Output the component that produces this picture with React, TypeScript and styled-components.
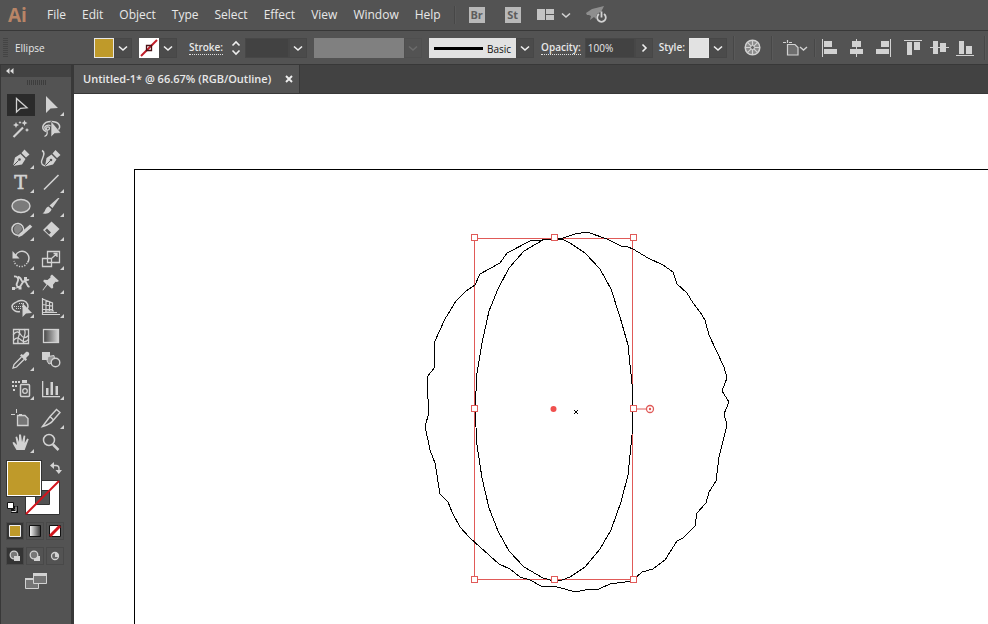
import React from "react";
import styled, { createGlobalStyle, css } from "styled-components";

const c = {
  panel: "#535353",
  dark: "#424242",
  line: "#383838",
  edge: "#474747",
  ink: "#d2d2d2",
  text: "#e8e8e8",
  gold: "#bf9a2a",
  select: "#e05a58",
};

const Global = createGlobalStyle`
  *, *::before, *::after { box-sizing: border-box; }
  body { margin: 0; background: ${c.panel}; font-family: "Open Sans", "Noto Sans", sans-serif; }
  button, input { font: inherit; color: inherit; border: 0; padding: 0; margin: 0; background: none; }
  svg { display: block; flex: none; }
`;

const Shell = styled.div`
  display: flex;
  flex-direction: column;
  height: 100vh;
  overflow: hidden;
  background: ${c.panel};
  color: ${c.text};
`;

const MenuBar = styled.header`
  display: flex;
  align-items: center;
  flex: none;
  height: 31px;
  padding-left: 8px;
  border-bottom: 1px solid ${c.line};
`;

const Logo = styled.span`
  width: 39px;
  font: 700 19px/28px "Open Sans", sans-serif;
  color: #b98567;
`;

const Menus = styled.nav`
  display: flex;
  gap: 16px;
`;

const MenuItem = styled.button`
  font-size: 12px;
  line-height: 20px;
`;

const Divider = styled.span<{ $tall?: boolean; $space: number }>`
  flex: none;
  width: 2px;
  height: ${(p) => (p.$tall ? 24 : 18)}px;
  margin: 0 ${(p) => p.$space}px;
  border-left: 1px solid ${c.edge};
  border-right: 1px solid #595959;
`;

const AppBadge = styled.button`
  width: 16px;
  height: 16px;
  margin-right: 20px;
  && {
    background: #b9b9b9;
    color: #5d5d5d;
    font-size: 11px;
    font-weight: 700;
    line-height: 16px;
  }
`;

const IconButton = styled.button<{ $left?: number }>`
  display: flex;
  flex: none;
  align-items: center;
  justify-content: center;
  && {
    margin-left: ${(p) => p.$left ?? 0}px;
    color: ${c.ink};
  }
`;

const OptionsBar = styled.section`
  display: flex;
  align-items: center;
  flex: none;
  height: 34px;
  padding-left: 3px;
  border-bottom: 1px solid ${c.line};
  font-size: 10px;
  white-space: nowrap;
`;

const Grip = styled.span<{ $wide?: boolean }>`
  ${(p) =>
    p.$wide
      ? css`
          width: 19px;
          height: 5px;
          background: repeating-linear-gradient(90deg, #3d3d3d 0 1px, transparent 1px 2px);
        `
      : css`
          width: 5px;
          height: 20px;
          background: repeating-linear-gradient(#444 0 1px, transparent 1px 2px);
        `}
`;

const ObjectKind = styled.span`
  flex: none;
  width: 79px;
  margin-left: 7px;
  line-height: 20px;
`;

const Group = styled.div<{ $after: number }>`
  display: flex;
  align-items: center;
  flex: none;
  height: 20px;
  margin-right: ${(p) => p.$after}px;
`;

const Swatch = styled.button<{ $fill: string }>`
  width: 20px;
  height: 20px;
  && {
    background: ${(p) => p.$fill};
    border: 1px solid #e6e6e6;
  }
`;

const Drop = styled.button<{ $dim?: boolean }>`
  display: flex;
  align-items: center;
  justify-content: center;
  width: 18px;
  height: 20px;
  && {
    border: 1px solid ${c.edge};
    border-color: ${(p) => (p.$dim ? "#4f4f4f" : c.edge)};
    color: ${(p) => (p.$dim ? "#6b6b6b" : "#f0f0f0")};
    background: ${(p) => (p.$dim ? "none" : "#4b4b4b")};
  }
`;

const FieldLabel = styled.label<{ $plain?: boolean }>`
  font-weight: 600;
  line-height: 13px;
  margin-right: 4px;
  border-bottom: 1px dotted ${(p) => (p.$plain ? "transparent" : "#e0e0e0")};
`;

const Field = styled.input<{ $w: number }>`
  width: ${(p) => p.$w}px;
  height: 20px;
  && {
    background: ${c.dark};
    border: 1px solid ${c.edge};
    padding-left: 2px;
  }
`;

const Steps = styled.span`
  display: flex;
  flex-direction: column;
  gap: 2px;
  margin: 0 4px;
`;

const Profile = styled.button`
  width: 90px;
  height: 20px;
  && {
    background: #808080;
  }
`;

const Brush = styled.button`
  display: flex;
  align-items: center;
  justify-content: space-between;
  width: 87px;
  height: 20px;
  && {
    background: #e2e2e2;
    color: #111;
    padding: 2px 5px 0;
  }
`;

const AlignTools = styled.div<{ $after: number }>`
  display: flex;
  flex: none;
  gap: 7px;
  margin-right: ${(p) => p.$after}px;
`;

const Body = styled.div`
  display: flex;
  flex: 1;
  min-height: 0;
`;

const ToolPanel = styled.aside`
  display: flex;
  flex-direction: column;
  flex: none;
  width: 74px;
  border-left: 1px solid ${c.line};
  border-right: 3px solid ${c.line};
`;

const PanelHead = styled.button`
  display: flex;
  align-items: center;
  height: 12px;
  width: 100%;
  && {
    background: ${c.dark};
    padding-left: 5px;
    color: #dcdcdc;
  }
`;

const GripRow = styled.div`
  display: flex;
  justify-content: center;
  height: 16px;
  padding-top: 3px;
`;

const ToolGroups = styled.div`
  display: flex;
  flex-direction: column;
  gap: 5px;
  padding-left: 5px;
`;

const ToolGroup = styled.div`
  display: grid;
  grid-template-columns: 30px 30px;
  grid-auto-rows: 24px;
`;

const ToolButton = styled.button<{ $on?: boolean }>`
  display: block;
  && {
    border-radius: 2px;
    background: ${(p) =>
      p.$on ? "linear-gradient(#2b2b2b, #2b2b2b) center / 28px 22px no-repeat" : "none"};
  }
`;

const ColorArea = styled.div`
  position: relative;
  height: 55px;
  margin: 7px 6px 6px;
`;

const StrokeBox = styled.button`
  position: absolute;
  right: 5px;
  bottom: 1px;
`;

const FillBox = styled.button`
  position: absolute;
  left: 0;
  top: 0;
  width: 34px;
  height: 35px;
  && {
    background: ${c.gold};
    border: 1px solid #fff;
    outline: 1px solid #333;
  }
`;

const Corner = styled.button<{ $swap?: boolean }>`
  position: absolute;
  ${(p) => (p.$swap ? "right: 3px; top: 1px;" : "left: 0; bottom: 3px;")}
`;

const ModeRow = styled.div`
  display: grid;
  grid-template-columns: repeat(3, 18px);
  gap: 2px;
  margin: 0 5px 7px;
`;

const Mode = styled.button<{ $on?: boolean }>`
  display: flex;
  align-items: center;
  justify-content: center;
  height: 18px;
  && {
    border: 1px solid #494949;
    background: ${(p) => (p.$on ? "#343434" : "none")};
  }
`;

const ScreenMode = styled.button`
  align-self: flex-start;
  && {
    margin: 1px 0 0 24px;
  }
`;

const Document = styled.main`
  display: flex;
  flex-direction: column;
  flex: 1;
  min-width: 0;
`;

const TabBar = styled.div`
  display: flex;
  height: 29px;
  flex: none;
  background: ${c.dark};
  border-bottom: 1px solid ${c.line};
`;

const Tab = styled.div`
  display: flex;
  align-items: center;
  gap: 14px;
  padding: 0 6px 0 9px;
  background: ${c.panel};
  border-right: 1px solid ${c.line};
`;

const TabTitle = styled.button`
  white-space: nowrap;
  && {
    font-size: 11px;
    font-weight: 600;
    line-height: 20px;
  }
`;

const Canvas = styled.div`
  flex: 1;
  min-height: 0;
  overflow: hidden;
  background: #fff;
`;

const Chevron = ({ right = false }: { right?: boolean }) => (
  <svg width="10" height="10" viewBox="0 0 10 10" fill="none" stroke="currentColor" strokeWidth="1.6">
    <path d={right ? "M3.5 1.5 7 5 3.5 8.5" : "M1 3.5 5 7 9 3.5"} />
  </svg>
);

const Step = ({ up = false }: { up?: boolean }) => (
  <svg width="10" height="7" viewBox="0 0 10 7" fill="none" stroke="#eee" strokeWidth="1.6">
    <path d={up ? "M1.500 5.500 5 2l3.500 3.500" : "M1.500 1.500 5 5l3.500-3.500"} />
  </svg>
);

const alignIcons: [string, React.ReactNode][] = [
  ["Align left", <><path d="M1.500 1v18" stroke={c.ink} /><path d="M3 3h8v6H3zM3 11h13v5H3z" /></>],
  ["Align horizontal center", <><path d="M9.500 1v18" stroke={c.ink} /><path d="M5 3h9v6H5zM3 11h13v5H3z" /></>],
  ["Align right", <><path d="M17.500 1v18" stroke={c.ink} /><path d="M8 3h8v6H8zM3 11h13v5H3z" /></>],
  ["Align top", <><path d="M0 2.500h18" stroke={c.ink} /><path d="M3 4h5v13H3zM10 4h6v8h-6z" /></>],
  ["Align vertical center", <><path d="M0 9.500h19" stroke={c.ink} /><path d="M3 3h5v13H3zM10 5h6v9h-6z" /></>],
  ["Align bottom", <><path d="M0 17.500h18" stroke={c.ink} /><path d="M3 3h5v13H3zM10 8h6v8h-6z" /></>],
];

const AlignIcon = ({ item }: { item: [string, React.ReactNode] }) => (
  <IconButton aria-label={item[0]}>
    <svg width="19" height="20" viewBox="0 0 19 20" fill={c.ink}>{item[1]}</svg>
  </IconButton>
);

const line = { fill: "none", stroke: c.ink } as const;

type Tool = { name: string; art: React.ReactNode; more?: boolean; on?: boolean };

const groups: Tool[][] = [
  [
    { name: "Selection", on: true, art: <path {...line} strokeWidth="1.3" d="M10.500 5.500v13.500l4-3.700 6.500-.5z" /> },
    { name: "Direct selection", more: true, art: <path d="M10 3v17l4.500-4.500 7.500-.5z" /> },
    {
      name: "Magic wand",
      art: (
        <>
          <path {...line} strokeWidth="2.2" d="M7.500 20 17 10.500" />
          <path d="m10 5 .9 2.100L13 8l-2.100.9L10 11l-.9-2.100L7 8l2.100-.9zM18.500 3l.9 2.100 2.100.9-2.100.9-.9 2.100-.9-2.100-2.100-.9 2.100-.9zM21 11l.7 1.300 1.300.7-1.300.7L21 15l-.7-1.300L19 13l1.300-.7zM14 4l.6 1 .9.500-.9.5-.6 1-.6-1-1-.5 1-.5z" />
        </>
      ),
    },
    {
      name: "Lasso",
      art: (
        <>
          <path {...line} strokeWidth="1.5" d="M10 14.500c-6-3-3-10 5-10 8 0 11 5 6.500 9" />
          <path {...line} strokeWidth="1.300" d="M15 9c-3-2-7 0-6 2.500s4.500 2 4.500-.2-3.500-1.800-3 .7c1 4 1.500 6-2 7.500" />
          <path stroke={c.panel} strokeWidth=".6" d="M15 4v16l3.500-3.500 6.500-.5z" />
        </>
      ),
    },
  ],
  [
    {
      name: "Pen", more: true,
      art: (
        <>
          <path d="M7 20 9 11.500l5.500-3.500 5 5-3.500 5.500zM15.500 7l3-3.500 5 5-3.500 3z" />
          <path stroke={c.panel} fill="none" d="m7 20 5.500-5.500" />
          <circle cx="13.500" cy="13.500" r="1.300" fill={c.panel} />
        </>
      ),
    },
    {
      name: "Curvature",
      art: (
        <>
          <path d="M9 20.500 10.500 12l5-3.500 5 5-3.500 5zM16.500 7.500l3-3.500 5 5-3.500 3z" />
          <path stroke={c.panel} fill="none" d="m9 20 5.500-5.500" />
          <circle cx="15" cy="14" r="1.300" fill={c.panel} />
          <path {...line} strokeWidth="1.400" d="M6 4.500C11 7 5 13 5.500 16.500S8 19 9 20" />
        </>
      ),
    },
    { name: "Type", more: true, art: <text x="14.500" y="19" textAnchor="middle" fontFamily="DejaVu Serif" fontSize="19" stroke={c.ink} strokeWidth=".6">T</text> },
    { name: "Line segment", more: true, art: <path {...line} strokeWidth="1.600" d="M8 19.500 22.500 5" /> },
    { name: "Ellipse", more: true, art: <ellipse cx="15" cy="12" rx="9" ry="6.500" fill="#7b7b7b" stroke={c.ink} strokeWidth="1.400" /> },
    {
      name: "Paintbrush", more: true,
      art: <path d="M23.500 4 16.500 14l-3-2.500L22 4zM12.500 12.500l3 2.700c-1 4-5 4.800-9 4.300 3-1.500 2.500-6 6-7z" />,
    },
    {
      name: "Shaper", more: true,
      art: (
        <>
          <path {...line} strokeWidth="1.500" d="M13 17a5.800 5.800 0 1 1 4.300-4" />
          <path fill="#858585" d="M8 11a4 4 0 1 1 7.500 1.500L12 16c-2.500 0-4-2.500-4-5z" />
          <path d="m12 19.500 1.500-4L24 6.500l2.300 2.300-10 8.700z" />
        </>
      ),
    },
    {
      name: "Eraser", more: true,
      art: (
        <>
          <path d="m15.500 3.500 8 7.500-8.500 8.500-8-7.500z" />
          <path fill={c.panel} d="m11 10.500 4 4-2 2-4-4z" />
        </>
      ),
    },
  ],
  [
    {
      name: "Rotate", more: true,
      art: (
        <>
          <path {...line} strokeWidth="1.500" d="M9.500 8.500a7 7 0 1 1 12 7" />
          <path {...line} strokeWidth="1.500" strokeDasharray="1.200 1.500" d="M21 16a7 7 0 0 1-13-2" />
          <path d="M6.500 4v7.500h7z" />
        </>
      ),
    },
    {
      name: "Scale", more: true,
      art: (
        <path {...line} strokeWidth="1.300" d="M11.500 4.500h12v11h-12zM6.500 11.500h9v8h-9zM16 11l4.500-4M17.500 6.500H21V10" />
      ),
    },
    {
      name: "Width", more: true,
      art: (
        <>
          <path {...line} strokeWidth="1.800" d="M8 5.500c4-.5 5 3 3.500 5.500s-1 5 1.500 5 3-6 5.500-6 1.500 5 5 6M12 6c4 0 3 6 5.500 5s3-3 5.500-2" />
          <path {...line} strokeWidth="1" d="M8 17.500l6-1.500" />
          <path d="M6 16h3v3H6zM18 6h3v3h-3zM12.500 15.500h3v3h-3z" />
        </>
      ),
    },
    {
      name: "Puppet warp", more: true,
      art: <path d="m16 3.500 7 6.500-2 1-1.500-.3-2.500 3 .2 3.300-1.700.5-4-3.700L7 19.500 6.500 19l4-5.500-3.300-3.200.8-1.500 3.500.2 3-2.500-.2-1.500z" />,
    },
    {
      name: "Shape builder", more: true,
      art: (
        <>
          <path {...line} strokeWidth="1.500" d="M14 16.500c-4 1-8-1.500-8-5C6 8.500 9 8 10.500 7s6.500-3 9.500 0 2 6 1 7" />
          <path {...line} strokeDasharray="1 1" d="M8 11.500h9M13 8.500h5M10 13.500h5" />
          <path d="M16.500 8v14l3.500-3.500 6-.5z" />
        </>
      ),
    },
    {
      name: "Perspective grid", more: true,
      art: <path {...line} strokeWidth="1.200" d="M6.500 3v17M6.500 4l10 4v8M6.500 9.500l10 1.500M6.500 14.500h10M10 5v12M13.500 7v9M6 19.500h18M7 17.500h14M9 16h9" />,
    },
  ],
  [
    {
      name: "Mesh",
      art: <path {...line} strokeWidth="1.300" d="M7.500 5.500h15v14h-15zM7 11c4-5 6-3 8 0s4 4 8 0M7 17c4-5 6-3 8-1s4 3 8-1M12.500 5c4 4-3 9 0 15M18 5c4 5-3 9 0 15" />,
    },
    { name: "Gradient", art: <rect x="7.500" y="5.500" width="15" height="13" fill="url(#toolGrad)" stroke={c.ink} strokeWidth="1.300" /> },
    {
      name: "Eyedropper", more: true,
      art: (
        <>
          <path {...line} strokeWidth="1.300" d="m15.500 9-7.500 7.500-1 3.500 3.500-1 7.500-7.500" />
          <path d="M14 7.500 15.500 6l1.500 1 3-3c2-1 4 1 3 3l-3 3 1 1.500-1.500 1.500z" />
        </>
      ),
    },
    {
      name: "Blend",
      art: (
        <>
          <path d="M6 4h8v8H6z" />
          <path fill="#949494" stroke={c.ink} d="M12 8.500l6-1 1 6-6 2.500-2-3z" />
          <circle cx="19.500" cy="14.500" r="4.300" fill={c.panel} stroke={c.ink} strokeWidth="1.400" />
        </>
      ),
    },
  ],
  [
    {
      name: "Symbol sprayer", more: true,
      art: (
        <>
          <path d="M6 4h2v2H6zM9 4h2v2H9zM12 4h2v2h-2zM6 8h2v2H6zM9 8h2v2H9zM7 12h2v2H7zM16 3h5v3h-5z" />
          <rect x="14.500" y="7.500" width="9" height="12" rx="1" {...line} strokeWidth="1.500" />
          <circle cx="19" cy="14" r="2.300" {...line} strokeWidth="1.300" />
        </>
      ),
    },
    { name: "Column graph", more: true, art: <path d="M6 4h1.300v15H24v1.300H6zM10 11h2.500v7H10zM14.500 5H17v13h-2.500zM19.500 9H22v9h-2.500z" /> },
  ],
  [
    {
      name: "Artboard",
      art: (
        <>
          <path fill="#767676" stroke={c.ink} strokeWidth="1.300" d="M11.500 9.500h7.500l3 3v7H11.500z" />
          <path {...line} d="M5 8.500h4M10.500 3v4M13 8.500h3" />
        </>
      ),
    },
    {
      name: "Slice", more: true,
      art: <path {...line} strokeWidth="1.400" d="M6.500 20.500 14 10.500l6.500-7 3.500 3-6.500 7.500c-2 3-6 5-11 6.500zM14 10.500l3.500 3.500" />,
    },
    {
      name: "Hand", more: true,
      art: <path d="M10.500 20C9 17 7 15 6.500 12.500l1.500-.5 3 3L9.500 7l1.500-.5L13 12l0-7.500h2L16 12l1.700-6.500 1.600.3L18.700 13l2.500-4.500 1.500.7-3 8-1 2.800z" />,
    },
    {
      name: "Zoom",
      art: (
        <>
          <circle cx="13" cy="10" r="5.500" {...line} strokeWidth="1.500" />
          <path {...line} strokeWidth="2.500" d="m17 14.500 5.500 5.500" />
        </>
      ),
    },
  ],
];

const ROUGH =
  "554,239 542,240 530,241 507,253 500,263 480,274 475,285 466,291 456,301 445,319 435,341 434,354 435,367 427,377 427,384 429,413 425,426 430,450 435,463 440,494 448,502 452,512 460,527 470,538 480,547 499,564 510,569 520,577 530,580 541,586 557,587 576,592 585,590 599,589 610,584 632,581 642,572 653,569 665,560 677,541 683,538 695,526 697,513 706,503 709,492 716,481 719,457 724,437 727,425 724,414 729,402 722,391 727,378 724,367 709,335 705,320 700,312 693,303 687,293 677,284 673,272 663,265 648,258 633,249 628,247 621,246 607,239 587,232 575,234 563,238";

const OVAL =
  "554,239 562,239 570,243 585,253 600,269 611,289 620,317 628,345 632,384 633,409 632,435 628,475 621,502 611,530 600,549 585,567 570,577 562,580 554,581 543,578 524,567 509,551 498,531 489,508 482,478 477,445 475,409 477,373 482,343 489,311 498,289 509,268 524,251 543,240";

const handles = [
  [474, 237], [554, 237], [633, 237], [474, 408], [633, 408], [474, 579], [554, 579], [633, 579],
];

const Artwork = () => (
  <svg width="100%" height="100%" role="img" aria-label="Ellipse artwork">
    <g transform="translate(-74 -94)" fill="none">
      <path d="M134.500 2000V169.500H4000" stroke="#000" shapeRendering="crispEdges" />
      <rect x="474.500" y="238.500" width="158" height="341" stroke={c.select} />
      <g stroke="#000" shapeRendering="crispEdges">
        <polygon points={ROUGH} />
        <polygon points={OVAL} />
      </g>
      <path d="M637 409h9" stroke={c.select} />
      <circle cx="650" cy="409" r="3.500" stroke={c.select} strokeWidth="1.300" />
      <circle cx="650" cy="409" r="1.200" fill={c.select} />
      {handles.map(([x, y]) => (
        <rect key={`${x}-${y}`} x={x - 2.5} y={y - 2.5} width="6" height="6" fill="#fff" stroke={c.select} />
      ))}
      <circle cx="553.500" cy="409" r="3" fill="#f0504e" />
      <path d="m574 410 4 4m0-4-4 4" stroke="#000" />
    </g>
  </svg>
);

const menus = ["File", "Edit", "Object", "Type", "Select", "Effect", "View", "Window", "Help"];

export default function App() {
  return (
    <Shell>
      <Global />
      <MenuBar>
        <Logo>Ai</Logo>
        <Menus>
          {menus.map((m) => (
            <MenuItem key={m}>{m}</MenuItem>
          ))}
        </Menus>
        <Divider $space={13} />
        <AppBadge>Br</AppBadge>
        <AppBadge>St</AppBadge>
        <IconButton $left={-4} aria-label="Arrange documents">
          <svg width="17" height="12" viewBox="0 0 17 12" fill="#c4c4c4">
            <path d="M0 0h8v11H0zM9 0h8v5H9zM9 6h8v5H9z" />
          </svg>
        </IconButton>
        <IconButton $left={7} aria-label="Arrange options">
          <Chevron />
        </IconButton>
        <IconButton $left={15} aria-label="GPU performance">
          <svg width="22" height="18" viewBox="0 0 22 18">
            <path fill="#8e8e8e" d="M0 7 6 3l12-3-3 6-5 7-2-2-4 3 1-4-2-1-2 0z" />
            <circle cx="15.500" cy="11.500" r="5.500" fill={c.panel} />
            <path {...line} strokeWidth="1.800" d="M13 8a4.300 4.300 0 1 0 5 0M15.500 5.500v6" />
          </svg>
        </IconButton>
      </MenuBar>

      <OptionsBar aria-label="Control panel">
        <Grip />
        <ObjectKind>Ellipse</ObjectKind>
        <Group $after={7}>
          <Swatch $fill={c.gold} aria-label="Fill color" />
          <Drop aria-label="Fill options"><Chevron /></Drop>
        </Group>
        <Group $after={12}>
          <IconButton aria-label="Stroke color">
            <svg width="20" height="20" viewBox="0 0 20 20">
              <path fill="#fff" d="M0 0h20v20H0z" />
              <path stroke="#c01c28" strokeWidth="2" d="M2 18 18 2" />
              <path fill="none" stroke="#4a1216" strokeWidth="1.300" d="M7.500 7.500h5v5h-5z" />
            </svg>
          </IconButton>
          <Drop aria-label="Stroke options"><Chevron /></Drop>
        </Group>
        <Group $after={7}>
          <FieldLabel htmlFor="weight">Stroke:</FieldLabel>
          <Steps>
            <IconButton aria-label="Increase stroke"><Step up /></IconButton>
            <IconButton aria-label="Decrease stroke"><Step /></IconButton>
          </Steps>
          <Field id="weight" $w={44} defaultValue="" />
          <Drop aria-label="Stroke weights"><Chevron /></Drop>
        </Group>
        <Group $after={7}>
          <Profile aria-label="Width profile" />
          <Drop $dim disabled aria-label="Width profiles"><Chevron /></Drop>
        </Group>
        <Group $after={7}>
          <Brush>
            <svg width="49" height="3" viewBox="0 0 49 3"><path d="M0 0h49v3H0z" /></svg>
            Basic
          </Brush>
          <Drop aria-label="Brushes"><Chevron /></Drop>
        </Group>
        <Group $after={6}>
          <FieldLabel htmlFor="opacity">Opacity:</FieldLabel>
          <Field id="opacity" $w={50} defaultValue="100%" />
          <Drop aria-label="Opacity slider"><Chevron right /></Drop>
        </Group>
        <Group $after={6}>
          <FieldLabel $plain htmlFor="style">Style:</FieldLabel>
          <Swatch id="style" $fill="#e2e2e2" />
          <Drop aria-label="Graphic styles"><Chevron /></Drop>
        </Group>
        <Divider $tall $space={0} />
        <IconButton $left={9} aria-label="Recolor artwork">
          <svg width="17" height="17" viewBox="0 0 17 17">
            <circle cx="8.500" cy="8.500" r="7.300" fill="#8b8b8b" stroke={c.ink} strokeWidth="1.500" />
            <path {...line} strokeWidth="1.200" d="M8.500 1v15M1 8.500h15M3.200 3.200l10.600 10.600M13.800 3.200 3.200 13.800" />
            <circle cx="8.500" cy="8.500" r="2" fill="#666" stroke={c.ink} />
          </svg>
        </IconButton>
        <Divider $tall $space={10} />
        <IconButton aria-label="Edit artboard">
          <svg width="26" height="16" viewBox="0 0 26 16">
            <path fill="#6e6e6e" stroke={c.ink} strokeWidth="1.200" d="M4.500 4.500h7.500l3 3v7.500h-10.500z" />
            <path {...line} strokeWidth="1.200" d="M0 2.500h3M4.500 0v3M6 2.500h3" />
            <path {...line} strokeWidth="1.400" d="m17 7 3.500 3L24 7" />
          </svg>
        </IconButton>
        <Divider $space={5} />
        <AlignTools $after={12}>
          {alignIcons.slice(0, 3).map((a) => <AlignIcon key={a[0]} item={a} />)}
        </AlignTools>
        <AlignTools $after={9}>
          {alignIcons.slice(3).map((a) => <AlignIcon key={a[0]} item={a} />)}
        </AlignTools>
        <Divider $tall $space={0} />
      </OptionsBar>

      <Body>
        <ToolPanel>
          <PanelHead aria-label="Collapse panel">
            <svg width="8" height="6" viewBox="0 0 8 6" fill="currentColor"><path d="M3.500 0v6L0 3zM7.500 0v6L4 3z" /></svg>
          </PanelHead>
          <GripRow><Grip $wide /></GripRow>
          <ToolGroups>
            {groups.map((g) => (
              <ToolGroup key={g[0].name}>
                {g.map((t) => (
                  <ToolButton key={t.name} $on={t.on} aria-label={t.name}>
                    <svg width="30" height="24" viewBox="0 0 30 24" fill={c.ink}>
                      {t.name === "Gradient" && (
                        <defs>
                          <linearGradient id="toolGrad">
                            <stop offset="0" stopColor="#444" />
                            <stop offset="1" stopColor="#d8d8d8" />
                          </linearGradient>
                        </defs>
                      )}
                      {t.art}
                      {t.more && <path d="M28 19v4h-4z" />}
                    </svg>
                  </ToolButton>
                ))}
              </ToolGroup>
            ))}
          </ToolGroups>
          <ColorArea>
            <StrokeBox aria-label="Stroke">
              <svg width="35" height="35" viewBox="0 0 35 35">
                <path fill="#fff" stroke="#333" d="M.5.5h34v34H.5z" />
                <path fill={c.panel} stroke="#333" d="M10.500 10.500h14v14h-14z" />
                <path stroke="#d1141c" strokeWidth="2" d="M1 34 34 1" />
              </svg>
            </StrokeBox>
            <FillBox aria-label="Fill" />
            <Corner $swap aria-label="Swap fill and stroke">
              <svg width="12" height="12" viewBox="0 0 12 12" fill={c.ink}>
                <path {...line} strokeWidth="1.400" d="M3 3.500h3c2 0 3 1 3 3V9" />
                <path d="M4 0v7L0 3.500zM5.500 8H12l-3.200 4z" />
              </svg>
            </Corner>
            <Corner aria-label="Default fill and stroke">
              <svg width="11" height="11" viewBox="0 0 11 11">
                <path fill="none" stroke="#111" strokeWidth="3" d="M5.500 5.500h4v4h-4z" />
                <path fill="#fff" stroke="#111" d="M.5.5h6v6h-6z" />
                <path fill="none" stroke="#ddd" d="M9 4.500v5H4.500" />
              </svg>
            </Corner>
          </ColorArea>
          <ModeRow>
            <Mode $on aria-label="Color"><svg width="12" height="12"><path fill={c.gold} stroke="#eee" d="M.5.5h11v11H.5z" /></svg></Mode>
            <Mode aria-label="Gradient fill">
              <svg width="12" height="12">
                <defs>
                  <linearGradient id="modeGrad"><stop offset="0" stopColor="#fff" /><stop offset="1" stopColor="#333" /></linearGradient>
                </defs>
                <path fill="url(#modeGrad)" stroke="#111" d="M.5.5h11v11H.5z" />
              </svg>
            </Mode>
            <Mode aria-label="None">
              <svg width="12" height="12"><path fill="#fff" stroke="#111" d="M.5.5h11v11H.5z" /><path stroke="#d1141c" strokeWidth="3" d="m1 11 10-10" /></svg>
            </Mode>
          </ModeRow>
          <ModeRow>
            <Mode $on aria-label="Draw normal"><svg width="12" height="12"><circle cx="5" cy="5" r="3.800" fill="#777" stroke={c.ink} strokeWidth="1.300" /><path fill={c.ink} d="M5 6h6v5H5z" /></svg></Mode>
            <Mode aria-label="Draw behind"><svg width="12" height="12"><path fill={c.ink} d="M5 6h6v5H5z" /><circle cx="5" cy="5" r="3.800" fill="#777" stroke={c.ink} strokeWidth="1.300" /></svg></Mode>
            <Mode aria-label="Draw inside"><svg width="12" height="12"><circle cx="6" cy="6" r="3.500" fill="#666" stroke={c.ink} strokeWidth="1.300" /><path fill={c.ink} d="M6 3h3v4H6z" /></svg></Mode>
          </ModeRow>
          <ScreenMode aria-label="Change screen mode">
            <svg width="23" height="17" viewBox="0 0 23 17">
              <path fill="#757575" stroke={c.ink} d="M.5 5.500h13v10H.5z" />
              <path fill="#757575" stroke={c.ink} d="M8.500.5h13v10h-13z" />
              <path fill={c.ink} d="M8 0h14v3H8zM0 5h8v2H0z" />
            </svg>
          </ScreenMode>
        </ToolPanel>

        <Document>
          <TabBar role="tablist">
            <Tab>
              <TabTitle role="tab" aria-selected>Untitled-1* @ 66.67% (RGB/Outline)</TabTitle>
              <IconButton aria-label="Close document">
                <svg width="8" height="8" viewBox="0 0 8 8" stroke="#eee" strokeWidth="1.900"><path d="m1 1 6 6m0-6L1 7" /></svg>
              </IconButton>
            </Tab>
          </TabBar>
          <Canvas><Artwork /></Canvas>
        </Document>
      </Body>
    </Shell>
  );
}
